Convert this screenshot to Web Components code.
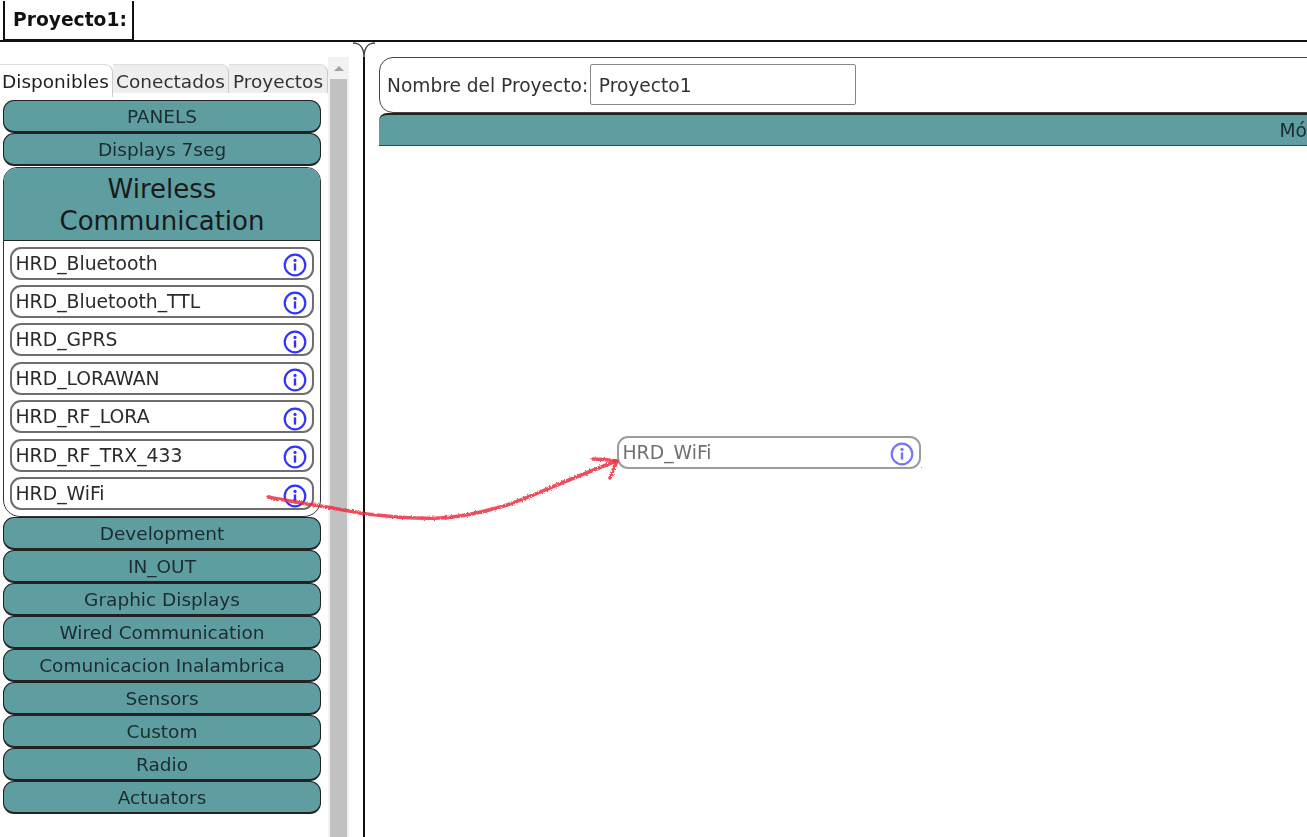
<!DOCTYPE html>
<html lang="es">
<head>
<meta charset="utf-8">
<title>Proyecto1</title>
<style>
  html, body { margin: 0; height: 100%; overflow: hidden; background: #fff; }
  body { font-family: "DejaVu Sans", sans-serif; color: #222; }
</style>
</head>
<body>
<app-root></app-root>
<script>
const ICON = `<svg width="24" height="24" viewBox="0 0 24 24" fill="none">
  <circle cx="12" cy="12" r="10.3" stroke="currentColor" stroke-width="2.2"/>
  <rect x="10.8" y="10.4" width="2.4" height="7.2" fill="currentColor"/>
  <circle cx="12" cy="7.4" r="1.6" fill="currentColor"/>
</svg>`;

class ModuleItem extends HTMLElement {
  constructor() {
    super();
    this.attachShadow({ mode: 'open' }).innerHTML = `
    <style>
      :host { display: flex; align-items: center; justify-content: space-between; box-sizing: border-box;
        height: 33px; border: 2px solid #6e6e6e; border-radius: 11px; background: #fff;
        padding: 0 5px 0 3.5px; font-size: 18.8px; color: #2b2b2b; }
      .txt { position: relative; top: 0; }
      .ico { color: #3333ff; display: flex; position: relative; top: 2px; }
    </style>
    <span class="txt"><slot></slot></span><span class="ico">${ICON}</span>`;
  }
}
customElements.define('module-item', ModuleItem);

class GroupHead extends HTMLElement {
  constructor() {
    super();
    this.attachShadow({ mode: 'open' }).innerHTML = `
    <style>
      :host { display: block; box-sizing: border-box; height: 33px; line-height: 31px; text-align: center;
        background: #5f9ea0; border: 1.5px solid #222; border-bottom-width: 2px; border-radius: 11px;
        font-size: 18.5px; color: #1c2c30; }
    </style>
    <slot></slot>`;
  }
}
customElements.define('group-head', GroupHead);

class GroupOpen extends HTMLElement {
  constructor() {
    super();
    this.attachShadow({ mode: 'open' }).innerHTML = `
    <style>
      :host { display: block; box-sizing: border-box; height: 350px; border: 1.5px solid #333; border-radius: 14px 14px 17px 17px;
        overflow: hidden; background: #fff; }
      .head { box-sizing: border-box; height: 73px; padding-top: 5px; background: #5f9ea0; border-bottom: 1.5px solid #222;
        text-align: center; font-size: 26px; line-height: 32px; color: #1a1a1a; }
      .list { display: flex; flex-direction: column; gap: 5.45px; padding: 5.5px 6px 0; }
    </style>
    <div class="head"><slot name="title"></slot></div>
    <div class="list"><slot></slot></div>`;
  }
}
customElements.define('group-open', GroupOpen);

class SideTabs extends HTMLElement {
  constructor() {
    super();
    this.attachShadow({ mode: 'open' }).innerHTML = `
    <style>
      :host { display: flex; height: 36px; font-size: 18.5px; box-sizing: border-box; padding-top: 7px; }
      div { box-sizing: border-box; height: 29px; line-height: 33px; background: #eee; color: #333;
        border-radius: 0 8px 0 0; border-top: 1px solid #ddd; border-right: 1px solid #ccc; text-align: center; white-space: nowrap; }
      .on { background: #fff; height: 33px; width: 113px; color: #222; text-align: left; padding-left: 2px; }
    </style>
    <div class="on">Disponibles</div>
    <div style="width:116px">Conectados</div>
    <div style="width:99px">Proyectos</div>`;
  }
}
customElements.define('side-tabs', SideTabs);

class SideBar extends HTMLElement {
  constructor() {
    super();
    this.attachShadow({ mode: 'open' }).innerHTML = `
    <style>
      :host { display: flex; width: 349px; flex: none; }
      .col { width: 328px; flex: none; }
      .stack { display: flex; flex-direction: column; padding: 7px 7px 0 3px; }
      .scroll { width: 21px; background: #f1f1f1; display: flex; flex-direction: column; }
      .arrow { height: 22px; display: flex; align-items: center; justify-content: center; }
      .arrow i { width: 0; height: 0; border: 5px solid transparent; border-top: 0; border-bottom: 5px solid #a3a3a3; }
      .thumb { flex: 1; background: #c1c1c1; margin: 0 2px; }
    </style>
    <div class="col">
      <side-tabs></side-tabs>
      <div class="stack"><slot></slot></div>
    </div>
    <div class="scroll"><div class="arrow"><i></i></div><div class="thumb"></div></div>`;
  }
}
customElements.define('side-bar', SideBar);

class ProjectForm extends HTMLElement {
  constructor() {
    super();
    this.attachShadow({ mode: 'open' }).innerHTML = `
    <style>
      :host { display: block; }
      .box { box-sizing: border-box; height: 56px; width: 1000px; display: flex; align-items: center; gap: 1.6px;
        border: 1.5px solid #444; border-radius: 14px 0 0 14px; padding: 0 0 0 7px; font-size: 18.6px; color: #333; }
      .field { box-sizing: border-box; width: 266px; height: 41px; line-height: 42px; border: 1px solid #888;
        border-radius: 2px; padding-left: 8px; margin-top: -2px; }
      .bar { box-sizing: border-box; height: 33px; background: #5f9ea0; border-top: 2px solid #222; border-bottom: 1.5px solid #444;
        border-radius: 8px 0 0 0; text-align: right; line-height: 31px; font-size: 18.6px; color: #1c2c30; white-space: nowrap; }
    </style>
    <div class="box"><span>Nombre del Proyecto:</span><div class="field">Proyecto1</div></div>
    <div class="bar">Mó</div>`;
  }
}
customElements.define('project-form', ProjectForm);

class DragGhost extends HTMLElement {
  constructor() {
    super();
    this.attachShadow({ mode: 'open' }).innerHTML = `
    <style>
      :host { position: absolute; left: 617px; top: 435.5px; width: 304px; opacity: .68; display: block; }
      :host::after { content: ""; position: absolute; right: -1px; bottom: 1px; width: 1px; height: 1px; background: #888; }
    </style>
    <module-item><slot></slot></module-item>`;
  }
}
customElements.define('drag-ghost', DragGhost);

class DragArrow extends HTMLElement {
  constructor() {
    super();
    this.attachShadow({ mode: 'open' }).innerHTML = `
    <style>
      :host { position: absolute; left: 0; top: 0; display: block; pointer-events: none; }
      svg { display: block; }
      path { fill: none; stroke: #ec3042; stroke-opacity: .85; stroke-width: 3.6; stroke-linecap: round; stroke-linejoin: round; }
    </style>
    <svg width="1307" height="837">
      <filter id="rough" x="-5%" y="-20%" width="110%" height="140%">
        <feTurbulence type="fractalNoise" baseFrequency=".55" numOctaves="2" seed="4"/>
        <feDisplacementMap in="SourceGraphic" scale="3"/>
      </filter>
      <g filter="url(#rough)">
        <path d="M268 497 C285 500 305 504 320 506 C340 509 352 512 367 514 C392 517 415 519 440 518 C465 517 487 511 507 505 C525 499 540 492 557 485 C578 476 597 469 616 461"/>
        <path d="M593 459 C601 459 610 460 617 461 C615 466 612 472 610 478"/>
      </g>
    </svg>`;
  }
}
customElements.define('drag-arrow', DragArrow);

class AppRoot extends HTMLElement {
  constructor() {
    super();
    this.attachShadow({ mode: 'open' }).innerHTML = `
    <style>
      :host { display: flex; flex-direction: column; position: relative; width: 1307px; height: 837px; overflow: hidden; filter: blur(.45px); }
      .top { box-sizing: border-box; height: 42px; flex: none; border-bottom: 2px solid #111; padding-left: 3px; }
      .tab { display: inline-block; box-sizing: border-box; height: 40px; width: 131px; margin-top: 1px;
        border: 2px solid #111; border-top: 0; border-bottom-width: 2px; padding: 8px 0 0 8px;
        font-size: 18.7px; font-weight: bold; color: #111; }
      .main { flex: 1; display: flex; min-height: 0; padding-top: 15px; position: relative; }
      .right { flex: 1; min-width: 0; overflow: hidden; box-sizing: border-box; border-left: 2px solid #111;
        margin-left: 14px; padding-left: 14px; }
      .fork { position: absolute; left: 352px; top: 0; }
    </style>
    <div class="top"><span class="tab">Proyecto1:</span></div>
    <div class="main">
      <side-bar>
        <group-head>PANELS</group-head>
        <group-head>Displays 7seg</group-head>
        <group-open style="margin-top:1px">
          <span slot="title">Wireless<br>Communication</span>
          <module-item>HRD_Bluetooth</module-item>
          <module-item>HRD_Bluetooth_TTL</module-item>
          <module-item>HRD_GPRS</module-item>
          <module-item>HRD_LORAWAN</module-item>
          <module-item>HRD_RF_LORA</module-item>
          <module-item>HRD_RF_TRX_433</module-item>
          <module-item>HRD_WiFi</module-item>
        </group-open>
        <group-head>Development</group-head>
        <group-head>IN_OUT</group-head>
        <group-head>Graphic Displays</group-head>
        <group-head>Wired Communication</group-head>
        <group-head>Comunicacion Inalambrica</group-head>
        <group-head>Sensors</group-head>
        <group-head>Custom</group-head>
        <group-head>Radio</group-head>
        <group-head>Actuators</group-head>
      </side-bar>
      <div class="right"><project-form></project-form></div>
      <svg class="fork" width="24" height="16" fill="none" stroke="#444" stroke-width="1.5">
        <path d="M1 1 C7 1 12 5 12 15 M23 1 C17 1 12 5 12 15"/>
      </svg>
    </div>
    <drag-ghost>HRD_WiFi</drag-ghost>
    <drag-arrow></drag-arrow>`;
  }
}
customElements.define('app-root', AppRoot);
</script>
</body>
</html>
